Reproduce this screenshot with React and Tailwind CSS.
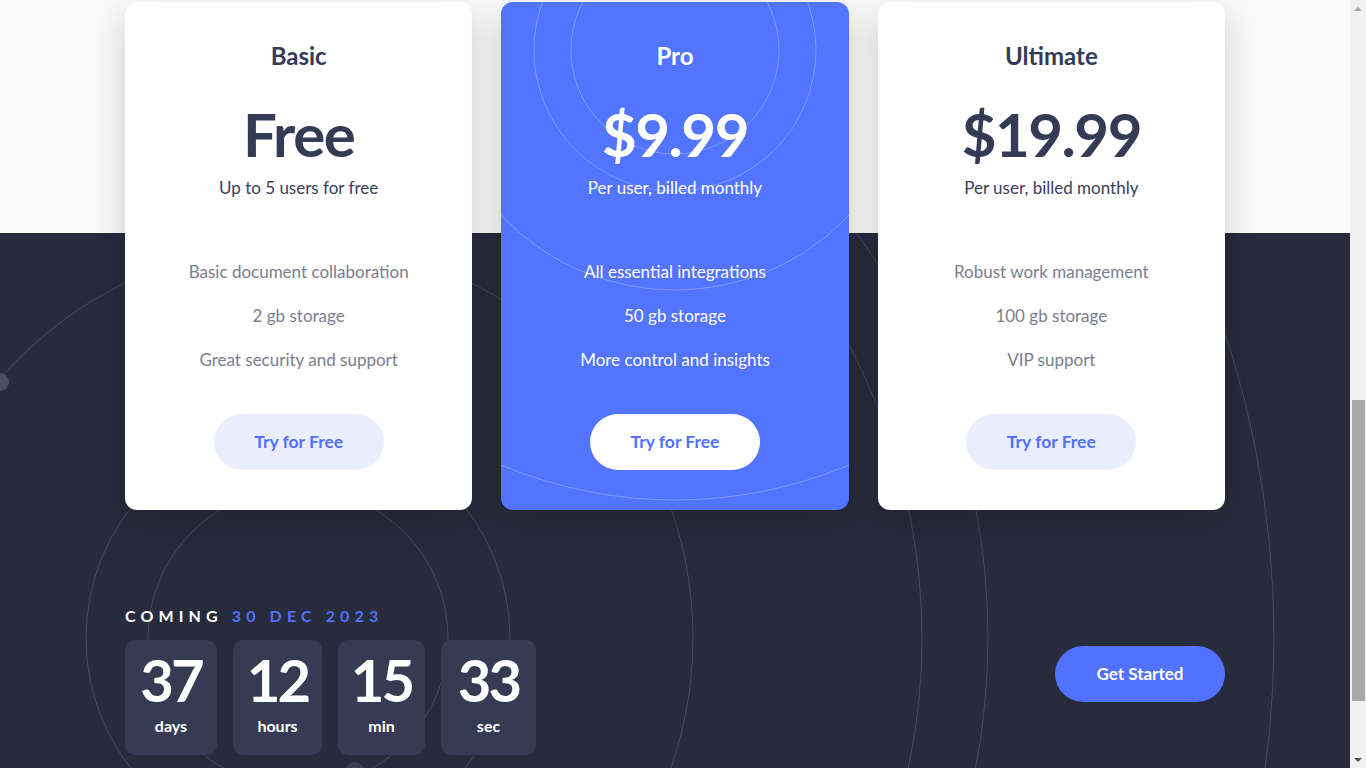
import React from 'react';

const plans = [
  {
    name: 'Basic',
    price: 'Free',
    note: 'Up to 5 users for free',
    features: ['Basic document collaboration', '2 gb storage', 'Great security and support'],
  },
  {
    name: 'Pro',
    price: '$9.99',
    note: 'Per user, billed monthly',
    features: ['All essential integrations', '50 gb storage', 'More control and insights'],
    featured: true,
  },
  {
    name: 'Ultimate',
    price: '$19.99',
    note: 'Per user, billed monthly',
    features: ['Robust work management', '100 gb storage', 'VIP support'],
  },
];

const countdown = [
  { value: '37', label: 'days', w: 'w-[92px]' },
  { value: '12', label: 'hours', w: 'w-[89px]' },
  { value: '15', label: 'min', w: 'w-[87px]' },
  { value: '33', label: 'sec', w: 'w-[95px]' },
];

// rings behind the dark section
const Backdrop = () => (
  <svg className="absolute inset-0 pointer-events-none" width="1350" height="768" viewBox="0 0 1350 768">
    <defs>
      <clipPath id="darkArea">
        <rect x="0" y="233" width="1350" height="535" />
      </clipPath>
    </defs>
    <g clipPath="url(#darkArea)" fill="none" stroke="#454a5d" strokeWidth="1">
      <circle cx="298" cy="638" r="150" />
      <circle cx="298" cy="638" r="212" />
      <circle cx="298" cy="638" r="395" />
      <circle cx="298" cy="638" r="624" />
      <circle cx="298" cy="638" r="690" />
      <circle cx="298" cy="638" r="976" />
    </g>
    <circle cx="0" cy="382" r="9" fill="#4a4e61" />
    <circle cx="355" cy="772" r="10" fill="#3c4054" />
  </svg>
);

const ProRings = () => (
  <svg className="absolute inset-0 pointer-events-none" width="348" height="508" viewBox="0 0 348 508">
    <g fill="none" stroke="rgba(255,255,255,0.28)" strokeWidth="1">
      <circle cx="174" cy="48" r="104" />
      <circle cx="174" cy="48" r="141" />
      <circle cx="174" cy="48" r="240" />
      <circle cx="174" cy="48" r="450" />
    </g>
  </svg>
);

const PlanCard = ({ plan }) => {
  const f = plan.featured;
  return (
    <div
      className={`relative overflow-hidden rounded-xl h-[508px] pt-[38px] pb-10 flex flex-col items-center shadow-[0_12px_36px_rgba(0,0,0,0.18)] ${
        f ? 'bg-[#5274ff]' : 'bg-white'
      }`}
    >
      {f && <ProRings />}
      <h3 className={`relative text-[24px] leading-8 font-bold ${f ? 'text-white' : 'text-[#353b55]'}`}>{plan.name}</h3>
      <div
        className={`relative mt-8 text-[60px] leading-[60px] font-bold tracking-[-1.5px] ${
          f ? 'text-white' : 'text-[#353b55]'
        }`}
      >
        {plan.price}
      </div>
      <p className={`relative mt-3 text-[17px] leading-6 ${f ? 'text-white' : 'text-[#3a4058]'}`}>{plan.note}</p>
      <ul className="relative mt-[60px] flex flex-col items-center gap-5">
        {plan.features.map((x) => (
          <li key={x} className={`text-[17px] leading-6 ${f ? 'text-white' : 'text-[#7b7e8e]'}`}>
            {x}
          </li>
        ))}
      </ul>
      <button
        className={`relative mt-[42px] w-[170px] h-[56px] rounded-full text-[17.5px] font-bold text-[#5271ff] ${
          f ? 'bg-white' : 'bg-[#ebeefe]'
        }`}
      >
        Try for Free
      </button>
    </div>
  );
};

const Scrollbar = () => (
  <aside className="w-4 h-full bg-[#f1f1f1] flex flex-col items-center">
    <div className="h-[17px] flex items-center justify-center">
      <div className="w-0 h-0 border-l-[4px] border-r-[4px] border-b-[4px] border-l-transparent border-r-transparent border-b-[#a3a3a3]" />
    </div>
    <div className="h-[383px]" />
    <div className="w-[13px] h-[301px] bg-[#a8a8a8]" />
    <div className="flex-1" />
    <div className="h-[17px] flex items-center justify-center">
      <div className="w-0 h-0 border-l-[4px] border-r-[4px] border-t-[4px] border-l-transparent border-r-transparent border-t-[#505050]" />
    </div>
  </aside>
);

export default function App() {
  return (
    <div className="flex w-full h-[768px] overflow-hidden font-['Lato','Open_Sans',sans-serif]">
      <main className="relative flex-1 h-full bg-[linear-gradient(#fafafa_233px,#282b3c_233px)]">
        <Backdrop />
        <div className="relative w-[1100px] mx-auto pt-[2px]">
          <div className="grid grid-cols-3 gap-[29px]">
            {plans.map((p) => (
              <PlanCard key={p.name} plan={p} />
            ))}
          </div>

          <div className="mt-[94px] flex items-end justify-between">
            <div>
              <p className="text-[16px] leading-6 font-bold tracking-[0.32em] text-white">
                COMING <span className="text-[#5271ff]">30 DEC 2023</span>
              </p>
              <div className="mt-3 flex gap-4">
                {countdown.map((c) => (
                  <div
                    key={c.label}
                    className={`${c.w} h-[115px] pt-[11px] rounded-[10px] bg-[#363a52] flex flex-col items-center`}
                  >
                    <span className="text-[58px] leading-[58px] font-bold tracking-[-3px] text-white">{c.value}</span>
                    <span className="mt-[5px] text-[16px] leading-6 font-bold text-white">{c.label}</span>
                  </div>
                ))}
              </div>
            </div>
            <button className="mb-[53px] w-[170px] h-[56px] rounded-full bg-[#5271ff] text-white text-[17px] font-bold">
              Get Started
            </button>
          </div>
        </div>
      </main>
      <Scrollbar />
    </div>
  );
}
